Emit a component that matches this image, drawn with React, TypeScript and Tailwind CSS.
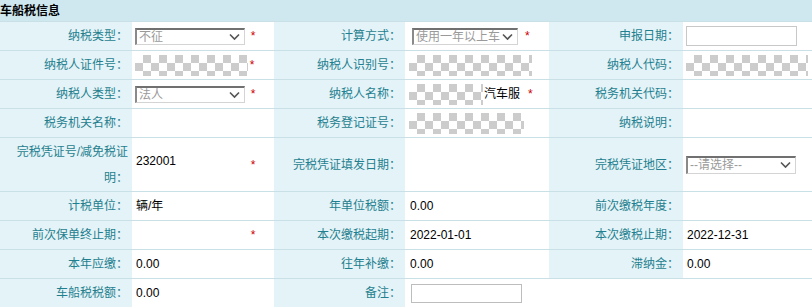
import type { ReactNode } from "react";

const labelCls =
  "flex items-center justify-end text-right pr-[4px] bg-[#e4f3f7] text-[#1f7f8f] border-t border-[#c9e0e7] leading-[26px]";
const valueCls =
  "flex items-center pl-[3px] bg-white text-black border-t border-[#c9e0e7]";
const checkerCls =
  "bg-[conic-gradient(#cccccc_25%,#ffffff_0_50%,#cccccc_0_75%,#ffffff_0)] bg-size-[16px_16px]";

function Label({ children }: { children?: ReactNode }) {
  return <div className={labelCls}>{children}</div>;
}

function Value({ children, className = "" }: { children?: ReactNode; className?: string }) {
  return <div className={`${valueCls} ${className}`}>{children}</div>;
}

function Star() {
  return <span className="text-[#cc0000] translate-y-[3px]">*</span>;
}

function Chevron() {
  return (
    <svg width="11" height="7" viewBox="0 0 11 7" className="absolute right-[4px] top-1/2 -translate-y-1/2">
      <polyline points="1,1 5.5,5.5 10,1" fill="none" stroke="#555" strokeWidth="1.6" />
    </svg>
  );
}

function Select({ text, w }: { text: string; w: string }) {
  return (
    <div
      className={`relative flex items-center h-[17px] ${w} bg-white overflow-hidden border-t-2 border-l-2 border-r border-b border-t-[#707070] border-l-[#8a8a8a] border-r-[#d4d4d4] border-b-[#d4d4d4]`}
    >
      <span className="pl-[2px] pr-[18px] text-[#9a9a9a] whitespace-nowrap leading-none">{text}</span>
      <Chevron />
    </div>
  );
}

function Checker({ w }: { w: string }) {
  return <div className={`h-[21px] ${w} ${checkerCls}`} />;
}

export default function App() {
  return (
    <div className="w-[812px] h-[307px] overflow-hidden bg-white text-[12px] font-['Liberation_Sans','Noto_Sans_CJK_SC',sans-serif]">
      <div className="h-[21px] flex items-center bg-[#cfe8ef] font-bold text-[12px] text-black">
        车船税信息
      </div>
      <div className="grid grid-cols-[132px_142px_131px_144px_134px_129px] grid-rows-[29px_29px_29px_29px_54px_29px_29px_29px_29px]">
        {/* row 1 */}
        <Label>纳税类型：</Label>
        <Value>
          <div className="w-[113px]">
            <Select text="不征" w="w-[110px]" />
          </div>
          <span className="w-[10px] text-center">
            <Star />
          </span>
        </Value>
        <Label>计算方式：</Label>
        <Value>
          <div className="ml-[4px] w-[110px]">
            <Select text="使用一年以上车" w="w-[106px]" />
          </div>
          <span className="ml-[3px]">
            <Star />
          </span>
        </Value>
        <Label>申报日期：</Label>
        <Value>
          <div className="h-[20px] w-[111px] border border-[#c8c8c8] bg-white" />
        </Value>

        {/* row 2 */}
        <Label>纳税人证件号：</Label>
        <Value>
          <Checker w="w-[113px]" />
          <span className="w-[8px] text-center">
            <Star />
          </span>
        </Value>
        <Label>纳税人识别号：</Label>
        <Value className="pl-[4px]">
          <Checker w="w-[123px]" />
        </Value>
        <Label>纳税人代码：</Label>
        <Value className="pl-[2px]">
          <Checker w="w-[122px]" />
        </Value>

        {/* row 3 */}
        <Label>纳税人类型：</Label>
        <Value>
          <div className="w-[113px]">
            <Select text="法人" w="w-[110px]" />
          </div>
          <span className="w-[10px] text-center">
            <Star />
          </span>
        </Value>
        <Label>纳税人名称：</Label>
        <Value className="pl-[4px]">
          <Checker w="w-[74px] shrink-0" />
          <span className="ml-[1px] whitespace-nowrap">汽车服</span>
          <span className="ml-[8px]">
            <Star />
          </span>
        </Value>
        <Label>税务机关代码：</Label>
        <Value />

        {/* row 4 */}
        <Label>税务机关名称：</Label>
        <Value />
        <Label>税务登记证号：</Label>
        <Value className="pl-[4px]">
          <Checker w="w-[115px]" />
        </Value>
        <Label>纳税说明：</Label>
        <Value />

        {/* row 5 */}
        <Label>
          <span>
            完税凭证号/减免税证
            <br />
            明：
          </span>
        </Label>
        <Value>
          <span className="w-[113px] pl-[1px] -translate-y-[4px]">232001</span>
          <span className="w-[10px] text-center">
            <Star />
          </span>
        </Value>
        <Label>完税凭证填发日期：</Label>
        <Value />
        <Label>完税凭证地区：</Label>
        <Value>
          <Select text="--请选择--" w="w-[110px] h-[18px]" />
        </Value>

        {/* row 6 */}
        <Label>计税单位：</Label>
        <Value className="pl-[4px]">辆/年</Value>
        <Label>年单位税额：</Label>
        <Value className="pl-[5px]">0.00</Value>
        <Label>前次缴税年度：</Label>
        <Value />

        {/* row 7 */}
        <Label>前次保单终止期：</Label>
        <Value>
          <span className="w-[113px]" />
          <span className="w-[10px] text-center">
            <Star />
          </span>
        </Value>
        <Label>本次缴税起期：</Label>
        <Value className="pl-[5px]">2022-01-01</Value>
        <Label>本次缴税止期：</Label>
        <Value className="pl-[4px]">2022-12-31</Value>

        {/* row 8 */}
        <Label>本年应缴：</Label>
        <Value className="pl-[4px]">0.00</Value>
        <Label>往年补缴：</Label>
        <Value className="pl-[5px]">0.00</Value>
        <Label>滞纳金：</Label>
        <Value className="pl-[4px]">0.00</Value>

        {/* row 9 */}
        <Label>车船税税额：</Label>
        <Value className="pl-[4px]">0.00</Value>
        <Label>备注：</Label>
        <Value className="col-span-3 pl-[6px]">
          <div className="h-[19px] w-[111px] border border-[#bdbdbd] bg-white" />
        </Value>
      </div>
    </div>
  );
}
